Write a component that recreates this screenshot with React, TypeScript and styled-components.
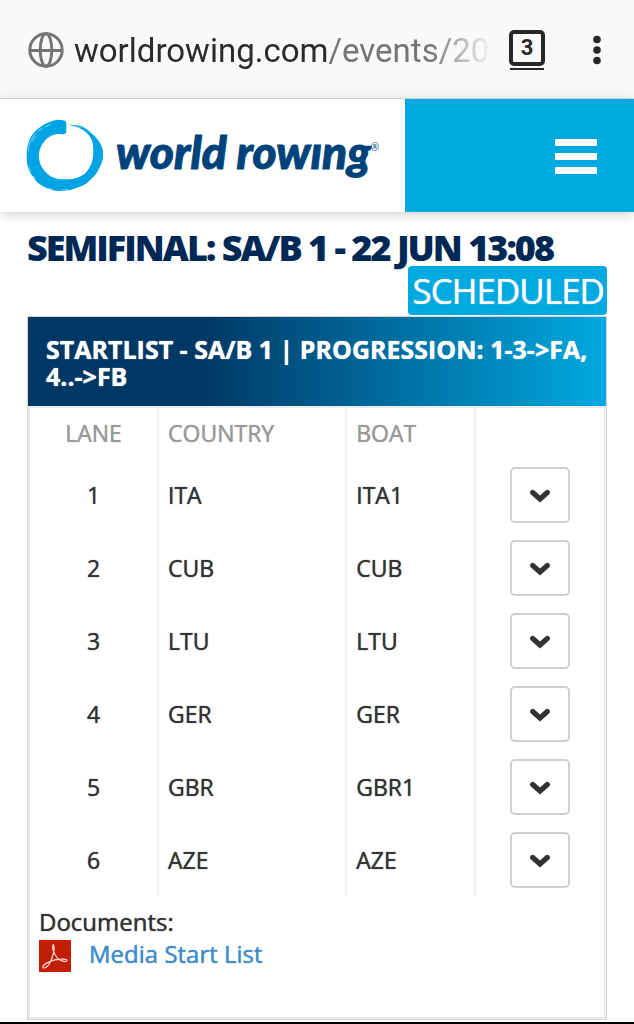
import React from "react";
import styled, { createGlobalStyle } from "styled-components";

const GlobalStyle = createGlobalStyle`
  *, *::before, *::after { box-sizing: border-box; }
  body {
    margin: 0;
    background: #fff;
    color: #333;
    font-family: "Open Sans", "Noto Sans", sans-serif;
    font-size: 23px;
    line-height: 32px;
  }
  button { font: inherit; padding: 0; cursor: pointer; }
`;

const Screen = styled.div`
  display: flex;
  flex-direction: column;
  min-height: 100vh;
`;

const BrowserBar = styled.div`
  display: flex;
  align-items: center;
  height: 99px;
  padding: 2px 21px 0 28px;
  background: #f9f9f9;
  border-bottom: 1px solid #dedede;
`;

const Address = styled.div`
  flex: 1;
  min-width: 0;
  margin-left: 10px;
  padding-top: 2px;
  overflow: hidden;
  white-space: nowrap;
  font: 400 33px/44px Roboto, sans-serif;
  color: #2b2b2b;
  mask-image: linear-gradient(to right, #000 calc(100% - 64px), transparent);
`;

const AddressPath = styled.span`
  color: #757575;
`;

const TabsButton = styled.button`
  display: flex;
  flex-direction: column;
  gap: 2px;
  width: 36px;
  margin-left: 16px;
  background: none;
  border: 0;
  color: #282828;
`;

const TabCount = styled.span`
  height: 36px;
  border: 4px solid #282828;
  border-radius: 5px;
  font: 700 22px/28px Roboto, sans-serif;
`;

const TabShelf = styled.span`
  height: 2px;
  margin: 0 1px;
  background: #282828;
`;

const MoreButton = styled.button`
  display: flex;
  justify-content: center;
  width: 32px;
  margin-left: 36px;
  background: none;
  border: 0;
`;

const SiteHeader = styled.header`
  display: flex;
  height: 113px;
  background: #fff;
  box-shadow: 0 2px 12px rgba(0, 0, 0, 0.2);
`;

const LogoLink = styled.a`
  display: flex;
  flex: 1;
  align-items: center;
  padding-left: 26px;
  color: #00437b;
  text-decoration: none;
`;

const Wordmark = styled.span`
  margin-left: 12px;
  padding-bottom: 8px;
  white-space: nowrap;
  font: italic 900 46px/56px Lato, sans-serif;
  -webkit-text-stroke: 1px #00437b;
`;

const Registered = styled.span`
  align-self: flex-start;
  margin-top: 40px;
  font: 400 10px/16px "Open Sans", sans-serif;
`;

const MenuButton = styled.button`
  display: flex;
  flex-direction: column;
  align-items: flex-end;
  justify-content: center;
  gap: 7px;
  width: 229px;
  padding: 2px 37px 0 0;
  background: #00a9e0;
  border: 0;
`;

const MenuBar = styled.span`
  width: 42px;
  height: 7px;
  border-radius: 1px;
  background: #fff;
`;

const Content = styled.main`
  flex: 1;
  padding: 18px 27px 2px;
`;

const RaceTitle = styled.h1`
  margin: 0;
  font-size: 36px;
  font-weight: 800;
  line-height: 36px;
  letter-spacing: -2px;
  color: #002855;
`;

const StatusRow = styled.div`
  display: flex;
  justify-content: flex-end;
  padding-bottom: 1px;
`;

const Status = styled.span`
  padding: 0 3px 0 4px;
  border-radius: 4px;
  background: #00a9e0;
  color: #fff;
  font-size: 35px;
  line-height: 49px;
  letter-spacing: -1px;
  text-shadow: 0 0 1px currentColor;
`;

const Panel = styled.section`
  border: 1px solid #d4d4d4;
`;

const PanelTitle = styled.h2`
  margin: 0;
  padding: 19px 16px 16px 18px;
  background: linear-gradient(to right, #003865 30%, #00a9e0);
  color: #fff;
  font-size: 25px;
  font-weight: 700;
  line-height: 27px;
  text-shadow: 0 0 1px currentColor;
`;

const PanelBody = styled.div`
  border: 2px solid #ececec;
  padding-bottom: 43px;
  text-shadow: 0 0 1px currentColor;
`;

const StartTable = styled.table`
  width: 100%;
  border-collapse: collapse;
  table-layout: fixed;
`;

const HeadCell = styled.th<{ $center?: boolean; $width?: string }>`
  width: ${(p) => p.$width ?? "auto"};
  height: 50px;
  padding: 0 9px;
  text-align: ${(p) => (p.$center ? "center" : "left")};
  font-weight: 400;
  color: #999;
  & + & { border-left: 2px solid #f0f0f0; }
`;

const Cell = styled.td<{ $center?: boolean }>`
  height: 73px;
  padding: 0 9px;
  text-align: ${(p) => (p.$center ? "center" : "left")};
  & + & { border-left: 2px solid #f0f0f0; }
`;

const ExpandButton = styled.button`
  display: flex;
  align-items: center;
  justify-content: center;
  width: 60px;
  height: 56px;
  margin: 0 auto;
  padding-top: 3px;
  background: #fff;
  border: 2px solid #d0d0d0;
  border-radius: 5px;
`;

const Documents = styled.div`
  padding: 10px 9px 0;
  font-size: 24px;
`;

const DocumentLink = styled.a`
  display: flex;
  align-items: center;
  gap: 18px;
  color: #428bca;
  text-decoration: none;
`;

const DocumentName = styled.span`
  padding-bottom: 4px;
`;

const BottomEdge = styled.div`
  height: 2px;
  background: #000;
`;

const entries = [
  { lane: 1, country: "ITA", boat: "ITA1" },
  { lane: 2, country: "CUB", boat: "CUB" },
  { lane: 3, country: "LTU", boat: "LTU" },
  { lane: 4, country: "GER", boat: "GER" },
  { lane: 5, country: "GBR", boat: "GBR1" },
  { lane: 6, country: "AZE", boat: "AZE" },
];

const Globe = () => (
  <svg width="36" height="36" viewBox="0 0 36 36" fill="none" stroke="#757575" strokeWidth="3" aria-hidden="true">
    <circle cx="18" cy="18" r="16.2" />
    <ellipse cx="18" cy="18" rx="5.8" ry="16.2" />
    <path d="M2 18.5h32" />
  </svg>
);

const Dots = () => (
  <svg width="8" height="30" viewBox="0 0 8 30" fill="#282828" aria-hidden="true">
    <circle cx="4" cy="4.5" r="3.8" />
    <circle cx="4" cy="15" r="3.8" />
    <circle cx="4" cy="25.5" r="3.8" />
  </svg>
);

const BrushRing = () => (
  <svg width="78" height="73" viewBox="0 0 78 73" aria-hidden="true">
    <path
      fill="#00a3e4"
      d="M41.500 5C47 6.500 52 5.500 56 7.500 60 9 63 12 65.700 14.500 70 18 72 21 74 24 76 28 77.500 31 77 35 77.500 40 76 44 74 47.500 72 52 70 56 65.700 59.500 62 64 57 67 52 68.500 46 71 40 72 34 72 28 72 22 70 17.300 67.500 12 65 9 61 5.700 56 2 51 .7 45 .7 39 .5 33 1 28 2.800 22.500 5 16 9 12 13 9 18 5 23 3 28 1.500 31 .3 35 .5 39.500 2 40.500 3 40.300 5 40.300 7V13.500C38 16 36 15.500 34 15 29 14.500 23 17 19.500 21 15 26 13 31 13 37 13 44 16 50 21 54.500 25 58.500 31 60.500 39 60.300 47 60.500 55 58.500 60 53.500 65 48 67.300 41 67.300 33 67.500 28 67 24 65.500 20.500 63 15.500 60 12.500 56 10.500 52 8 47 7.500 41.500 5Z"
    />
    <path
      fill="none"
      stroke="#fff"
      strokeOpacity="0.7"
      strokeWidth="0.700"
      d="M2 32C3 25 5 19 10 14M12 12.500 17 9M19 8 25 5.500M6 22 10 17M2.500 47 4.500 52M7 57 10 60M22 69 27 70.500M36 71 42 70.500M66 25C66.700 28 66.500 30 66 33M48 6.500 55 9"
    />
  </svg>
);

const Chevron = () => (
  <svg width="22" height="14" viewBox="0 0 22 14" fill="none" aria-hidden="true">
    <path d="M3.700 3.500 11 10 18.300 3.500" stroke="#333" strokeWidth="5.200" strokeLinecap="round" />
  </svg>
);

const PdfIcon = () => (
  <svg width="32" height="32" viewBox="0 0 32 32" aria-hidden="true">
    <path fill="#c11e07" d="M0 0h32v32H0z" />
    <path
      fill="none"
      stroke="#f9dcd7"
      strokeWidth="1.200"
      strokeLinejoin="round"
      d="M14.200 4.500C12.800 8 14.500 13 18 17.500 21 21.200 27 22.500 28 20.800 28.800 18.800 22 18.700 17 19.700 11 21 4 24.500 3.800 27 4 29 8 28 10.500 23.500 13.800 17.500 16.500 8 14.200 4.500Z"
    />
  </svg>
);

export default function App() {
  return (
    <Screen>
      <GlobalStyle />
      <BrowserBar>
        <Globe />
        <Address>
          worldrowing.com<AddressPath>/events/20</AddressPath>
        </Address>
        <TabsButton aria-label="Open tabs">
          <TabCount>3</TabCount>
          <TabShelf />
        </TabsButton>
        <MoreButton aria-label="More options">
          <Dots />
        </MoreButton>
      </BrowserBar>

      <SiteHeader>
        <LogoLink href="#" aria-label="World Rowing">
          <BrushRing />
          <Wordmark>world rowıng</Wordmark>
          <Registered>®</Registered>
        </LogoLink>
        <MenuButton aria-label="Menu">
          <MenuBar />
          <MenuBar />
          <MenuBar />
        </MenuButton>
      </SiteHeader>

      <Content>
        <RaceTitle>SEMIFINAL: SA/B 1 - 22 JUN 13:08</RaceTitle>
        <StatusRow>
          <Status>SCHEDULED</Status>
        </StatusRow>
        <Panel>
          <PanelTitle>{"STARTLIST - SA/B 1 | PROGRESSION: 1-3->FA, 4..->FB"}</PanelTitle>
          <PanelBody>
            <StartTable>
              <thead>
                <tr>
                  <HeadCell $center $width="22.3%">LANE</HeadCell>
                  <HeadCell $width="32.8%">COUNTRY</HeadCell>
                  <HeadCell $width="22.4%">BOAT</HeadCell>
                  <HeadCell />
                </tr>
              </thead>
              <tbody>
                {entries.map((e) => (
                  <tr key={e.lane}>
                    <Cell $center>{e.lane}</Cell>
                    <Cell>{e.country}</Cell>
                    <Cell>{e.boat}</Cell>
                    <Cell>
                      <ExpandButton aria-label={`Show crew of ${e.boat}`}>
                        <Chevron />
                      </ExpandButton>
                    </Cell>
                  </tr>
                ))}
              </tbody>
            </StartTable>
            <Documents>
              Documents:
              <DocumentLink href="#">
                <PdfIcon />
                <DocumentName>Media Start List</DocumentName>
              </DocumentLink>
            </Documents>
          </PanelBody>
        </Panel>
      </Content>
      <BottomEdge />
    </Screen>
  );
}
